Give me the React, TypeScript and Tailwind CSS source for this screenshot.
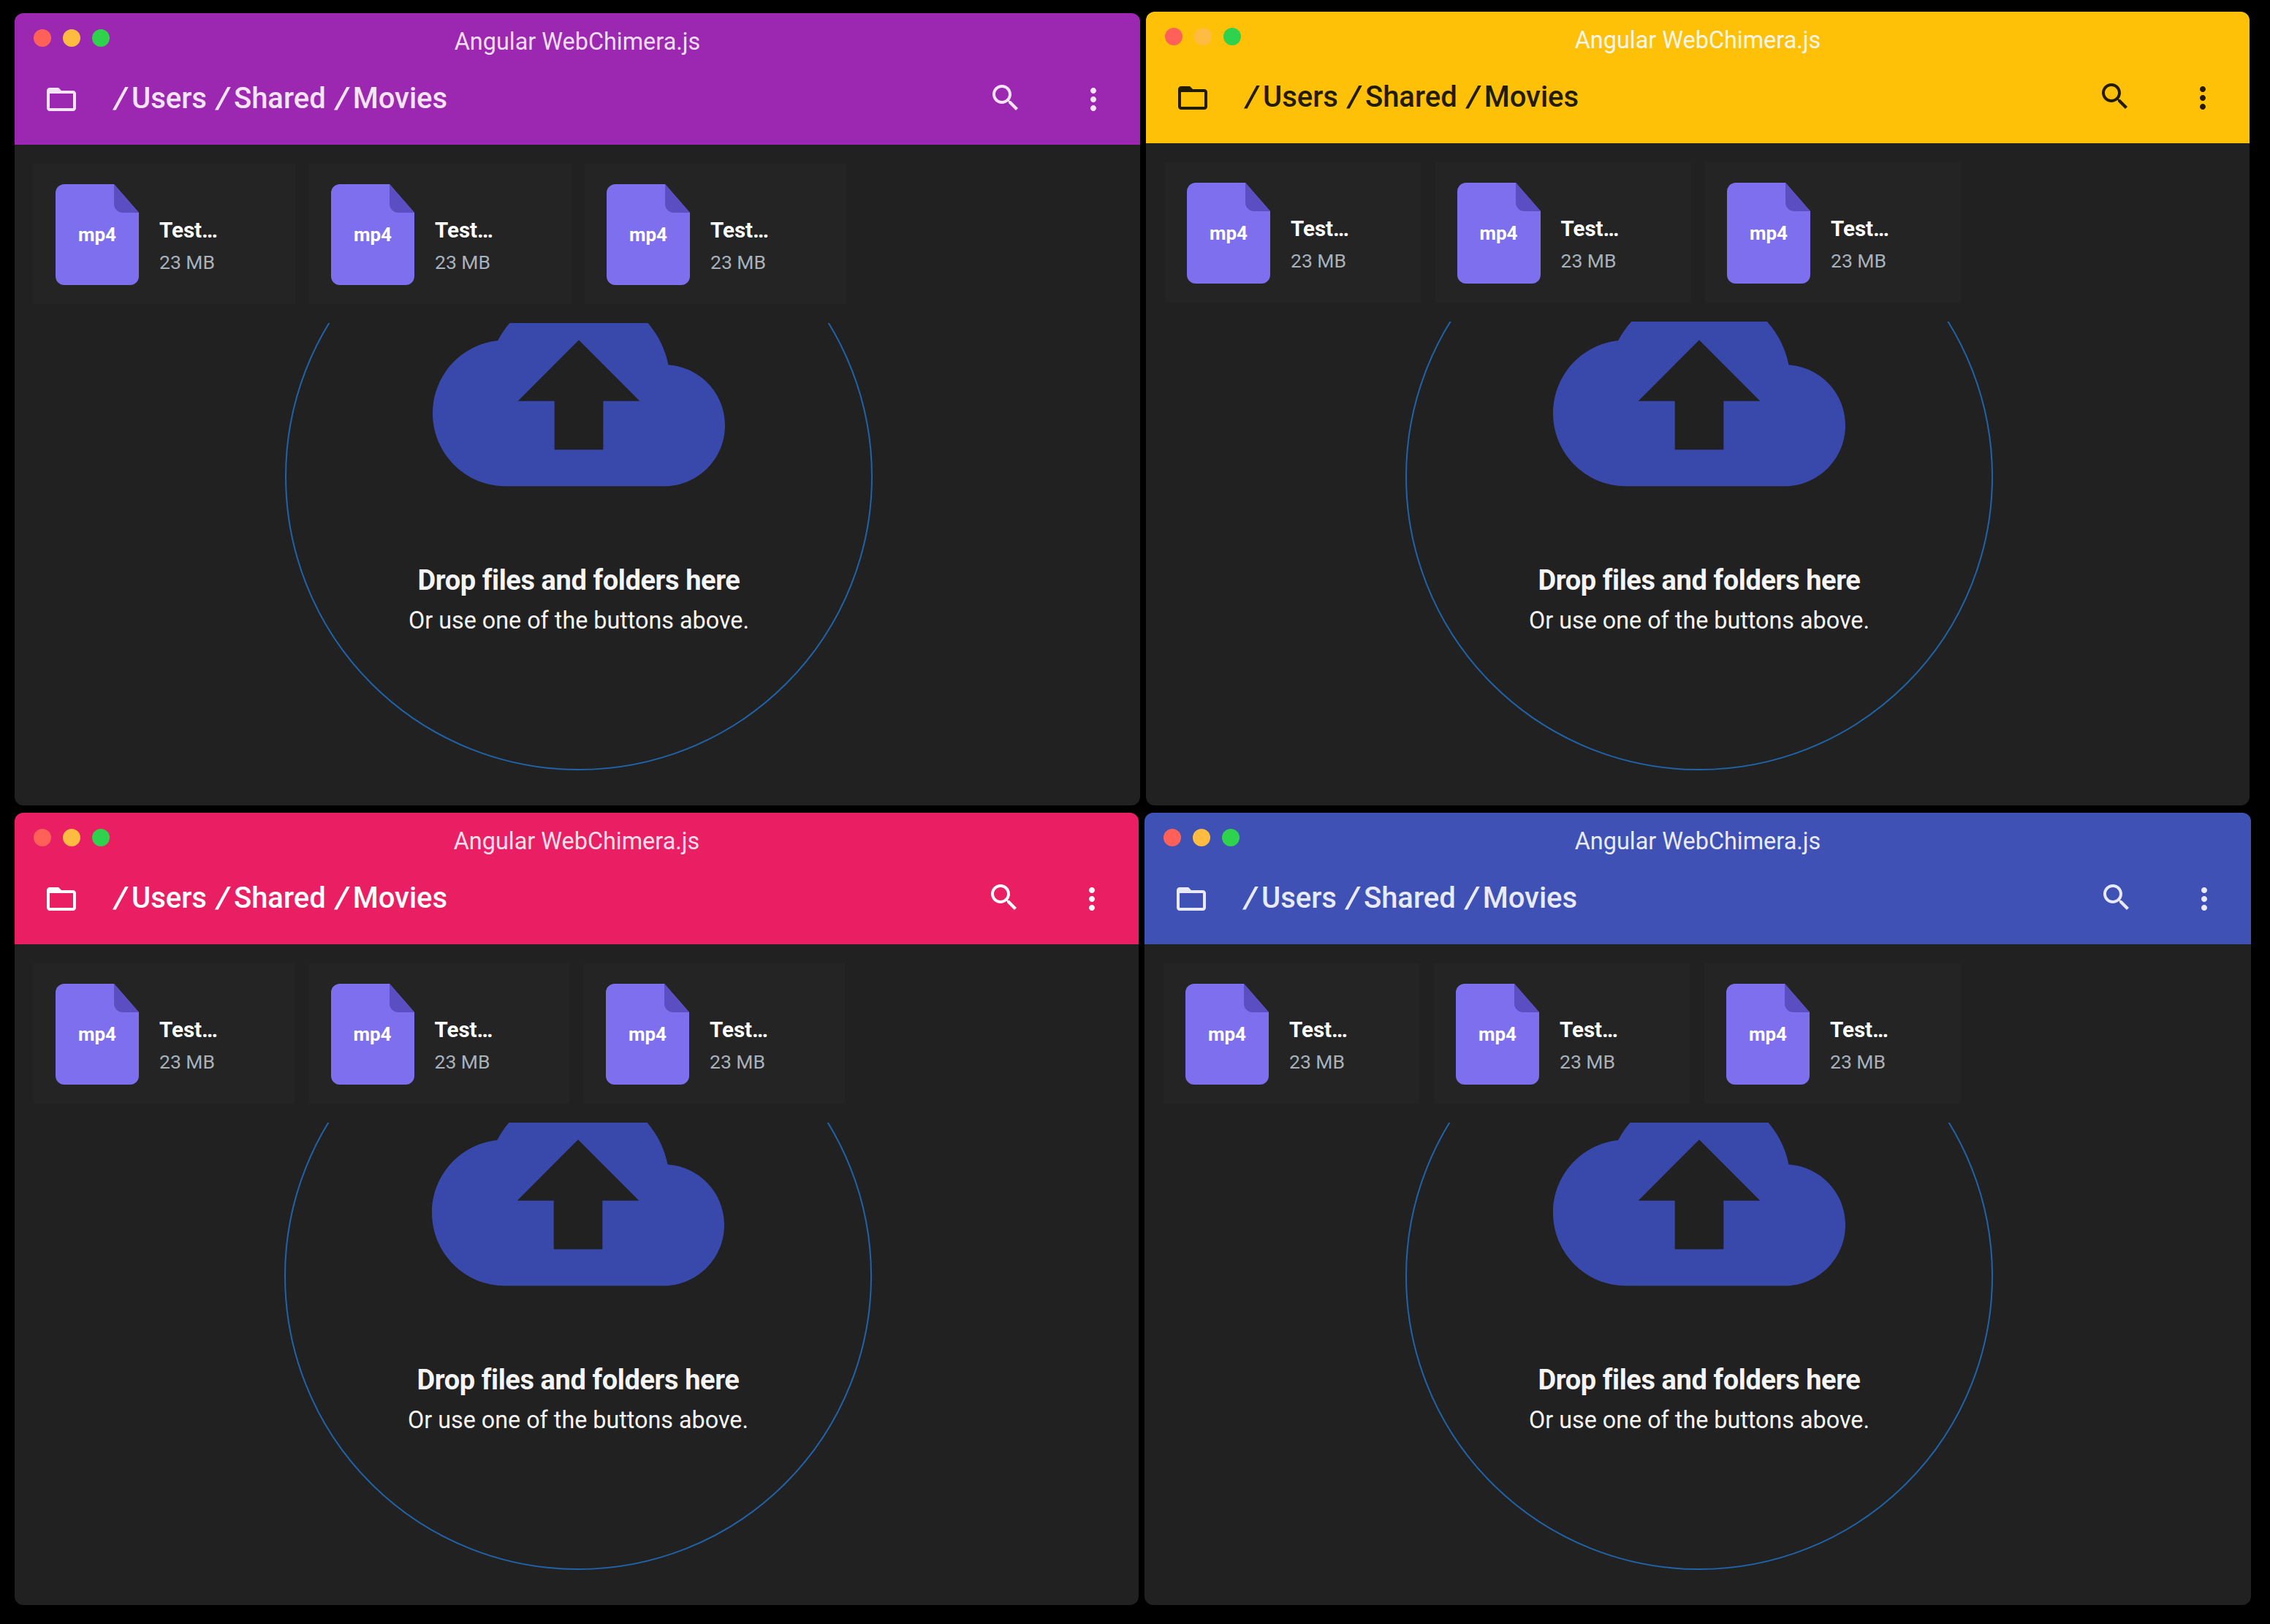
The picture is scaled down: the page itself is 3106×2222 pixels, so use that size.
const folderPath =
  'M20 6h-8l-2-2H4c-1.1 0-1.99.9-1.99 2L2 18c0 1.1.9 2 2 2h16c1.1 0 2-.9 2-2V8c0-1.1-.9-2-2-2zm0 12H4V8h16v10z';
const searchPath =
  'M15.5 14h-.79l-.28-.27C15.41 12.59 16 11.11 16 9.5 16 5.91 13.09 3 9.5 3S3 5.91 3 9.5 5.91 16 9.5 16c1.61 0 3.09-.59 4.23-1.57l.27.28v.79l5 4.99L20.49 19l-4.99-5zm-6 0C7.01 14 5 11.99 5 9.5S7.01 5 9.5 5 14 7.01 14 9.5 11.99 14 9.5 14z';
const moreVertPath =
  'M12 8c1.1 0 2-.9 2-2s-.9-2-2-2-2 .9-2 2 .9 2 2 2zm0 2c-1.1 0-2 .9-2 2s.9 2 2 2 2-.9 2-2-.9-2-2-2zm0 6c-1.1 0-2 .9-2 2s.9 2 2 2 2-.9 2-2-.9-2-2-2z';
const cloudUploadPath =
  'M19.35 10.04C18.67 6.59 15.64 4 12 4 9.11 4 6.6 5.64 5.35 8.04 2.34 8.36 0 10.91 0 14c0 3.31 2.69 6 6 6h13c2.76 0 5-2.24 5-5 0-2.64-2.05-4.78-4.65-4.96zM14 13v4h-4v-4H7l5-5 5 5h-3z';

const windows = [
  {
    id: 'purple',
    frame: 'mt-[2px] w-[1540px] h-[1084px]',
    header: 'bg-[#9c27b0]',
    title: 'text-[#f1def5]',
    nav: 'text-[#f3e5f5]',
    files: 'gap-[19px]',
    card: 'w-[358px]',
    circle: '-mt-[192px]',
  },
  {
    id: 'amber',
    frame: 'ml-[8px] w-[1510px] h-[1086px]',
    header: 'bg-[#ffc107]',
    title: 'text-[#f7f5ec]',
    nav: 'text-[#231c04]',
    files: 'gap-[20px]',
    card: 'w-[349.5px]',
    circle: '-mt-[190px]',
  },
  {
    id: 'pink',
    frame: 'w-[1538px] h-[1084px]',
    header: 'bg-[#e91e63]',
    title: 'text-[#fbdfe9]',
    nav: 'text-[#ffffff]',
    files: 'gap-[20px]',
    card: 'w-[356.5px]',
    circle: '-mt-[192px]',
  },
  {
    id: 'indigo',
    frame: 'ml-[8px] w-[1514px] h-[1084px]',
    header: 'bg-[#3f51b5]',
    title: 'text-[#e8eaf6]',
    nav: 'text-[#e8eaf6]',
    files: 'gap-[20px]',
    card: 'w-[350px]',
    circle: '-mt-[192px]',
  },
];

type WindowSpec = (typeof windows)[number];

function Icon({ path, className }: { path: string; className?: string }) {
  return (
    <svg viewBox="0 0 24 24" fill="currentColor" className={className}>
      <path d={path} />
    </svg>
  );
}

function FileCard({ width }: { width: string }) {
  return (
    <div className={`flex h-[192px] items-center gap-[28px] bg-[#242424] pl-[30px] ${width}`}>
      <div className="relative mt-[2px] h-[138px] w-[114px] shrink-0">
        <svg viewBox="0 0 114 138" className="h-full w-full">
          <path d="M12 0H80L114 39V126a12 12 0 0 1-12 12H12a12 12 0 0 1-12-12V12A12 12 0 0 1 12 0Z" fill="#7e6fee" />
          <path d="M80 0L114 39H92a12 12 0 0 1-12-12Z" fill="#5a4ec2" />
        </svg>
        <span className="absolute inset-x-0 top-[51px] text-center text-[26px] leading-[36px] font-bold text-white">
          mp4
        </span>
      </div>
      <div className="mt-[31px] flex flex-col">
        <span className="text-[29.5px] leading-[36px] font-bold text-white">Test…</span>
        <span className="mt-[10px] text-[26.5px] leading-[32px] text-[#a8b2bc]">23 MB</span>
      </div>
    </div>
  );
}

function AppWindow({ spec }: { spec: WindowSpec }) {
  return (
    <div className={`flex flex-col overflow-hidden rounded-[12px] bg-[#212121] ${spec.frame}`}>
      <header className={`h-[180px] shrink-0 ${spec.header}`}>
        <div className="grid grid-cols-[1fr_auto_1fr] px-[26px] pt-[19px]">
          <div className="mt-[3px] flex gap-[16px]">
            <span className="h-[24px] w-[24px] rounded-full bg-[#ff6159]" />
            <span className="h-[24px] w-[24px] rounded-full bg-[#ffbc40]" />
            <span className="h-[24px] w-[24px] rounded-full bg-[#2fd24d]" />
          </div>
          <span className={`text-[32.4px] leading-[40px] ${spec.title}`}>Angular WebChimera.js</span>
        </div>
        <div className={`mt-[33px] flex items-center px-[40px] ${spec.nav}`}>
          <Icon path={folderPath} className="h-[48px] w-[48px]" />
          <div className="mb-[2px] ml-[46px] flex gap-[11px] text-[40px] leading-[48px] font-medium">
            {['Users', 'Shared', 'Movies'].map((name) => (
              <span key={name} className="flex">
                <span className="mr-[3px] w-[23px] scale-x-[1.45] text-center font-normal">/</span>
                {name}
              </span>
            ))}
          </div>
          <Icon path={searchPath} className="mb-[4px] ml-auto h-[48px] w-[48px]" />
          <Icon path={moreVertPath} className="ml-[72px] h-[48px] w-[48px]" />
        </div>
      </header>
      <div className={`flex h-[244px] shrink-0 items-start px-[26px] pt-[26px] ${spec.files}`}>
        <FileCard width={spec.card} />
        <FileCard width={spec.card} />
        <FileCard width={spec.card} />
      </div>
      <div className="flex min-h-0 flex-1 justify-center overflow-hidden pl-[4px]">
        <div
          className={`flex h-[804px] w-[804px] shrink-0 flex-col items-center rounded-full border-2 border-[#2063a8] pt-[80px] text-center ${spec.circle}`}
        >
          <Icon path={cloudUploadPath} className="h-[400px] w-[400px] shrink-0 text-[#3949ab]" />
          <p className="mt-[38px] text-[38px] leading-[48px] font-bold tracking-[-0.4px] text-[#f5f5f5]">
            Drop files and folders here
          </p>
          <p className="mt-[15px] text-[32.3px] leading-[32px] text-[#f5f5f5]">
            Or use one of the buttons above.
          </p>
        </div>
      </div>
    </div>
  );
}

export default function App() {
  return (
    <div className="h-[2222px] w-[3106px] overflow-hidden bg-black pt-[16px] font-['Roboto',sans-serif]">
      <div className="flex items-start pl-[20px]">
        <AppWindow spec={windows[0]} />
        <AppWindow spec={windows[1]} />
      </div>
      <div className="mt-[10px] flex items-start pl-[20px]">
        <AppWindow spec={windows[2]} />
        <AppWindow spec={windows[3]} />
      </div>
    </div>
  );
}
